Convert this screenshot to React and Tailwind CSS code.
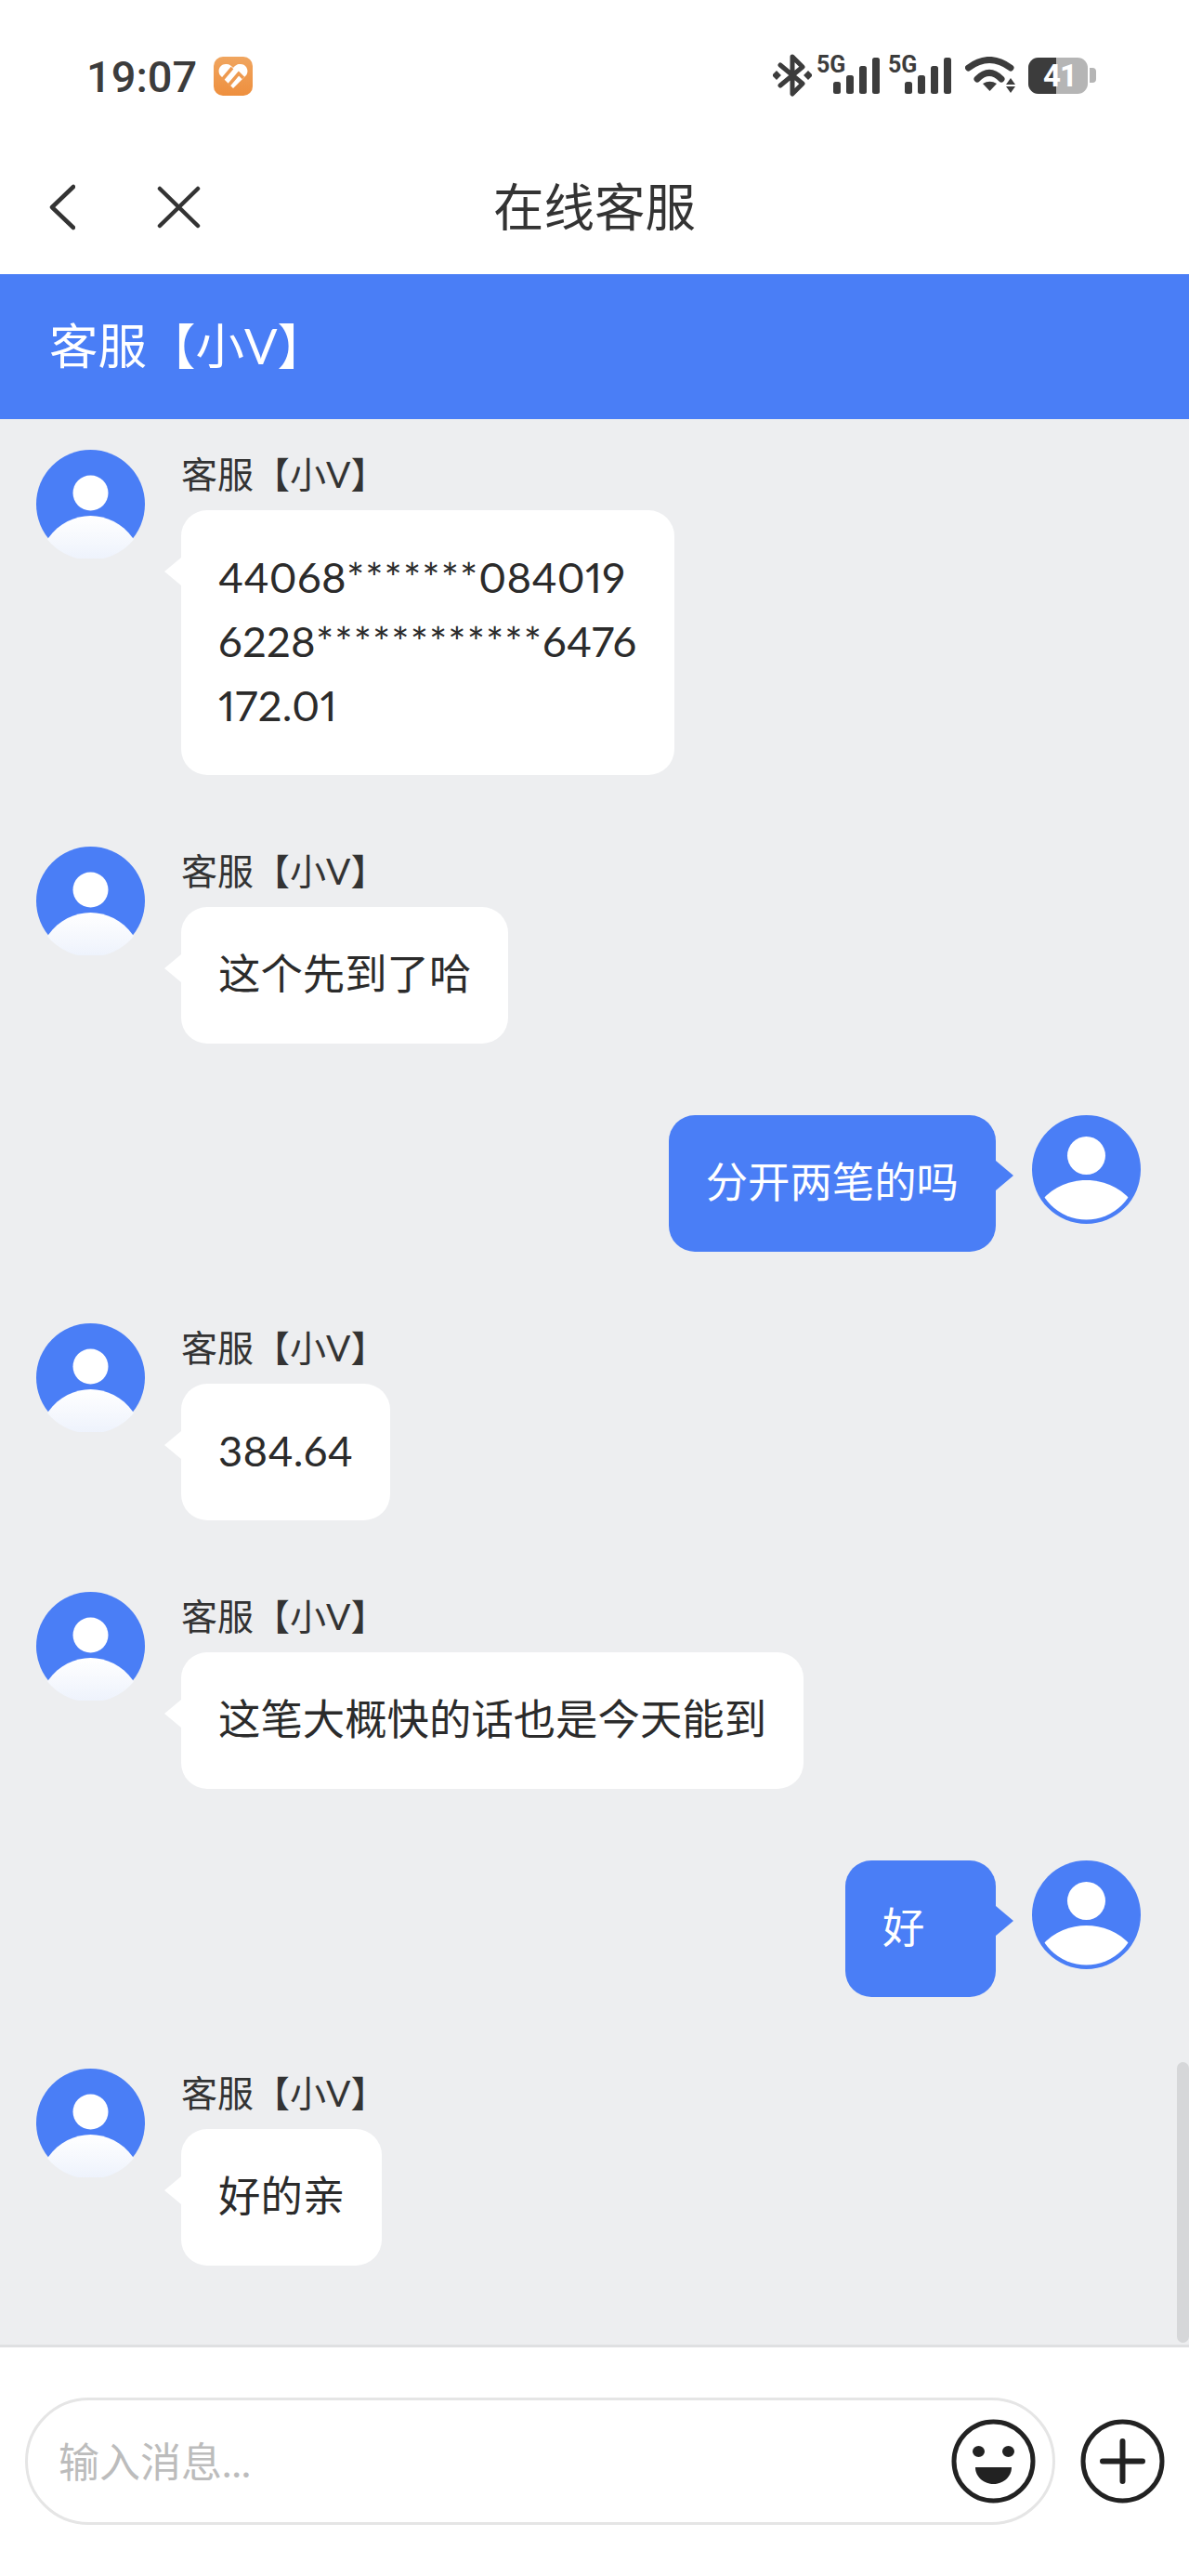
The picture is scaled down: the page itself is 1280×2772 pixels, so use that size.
const fontStack = 'font-[Lato,"Noto_Sans_CJK_SC",sans-serif]';

function Avatar({ ring }) {
  return (
    <svg width="117" height="117" viewBox="0 0 117 117" className="shrink-0">
      <defs>
        <linearGradient id="avatar-fade" x1="0" y1="0" x2="0" y2="1">
          <stop offset="0" stopColor="#ffffff" />
          <stop offset="1" stopColor="#edf2fc" />
        </linearGradient>
        <clipPath id="avatar-clip">
          <circle cx="58.5" cy="58.5" r="60" />
        </clipPath>
        <clipPath id="avatar-clip-ring">
          <circle cx="58.5" cy="58.5" r="54" />
        </clipPath>
      </defs>
      <circle cx="58.5" cy="58.5" r="58.5" fill="#4a7ef6" />
      {ring ? (
        <>
          <circle cx="58.5" cy="43.5" r="20.5" fill="#fff" />
          <path d="M10 92 C24 76 42 70 58.5 70 C75 70 93 76 107 92 V117 H10 Z" fill="#fff" clipPath="url(#avatar-clip-ring)" />
        </>
      ) : (
        <>
          <circle cx="58.5" cy="46.5" r="19" fill="#fff" />
          <path d="M13 95 C24 79 42 71 58.5 71 C75 71 93 79 104 95 L120 120 H-3 Z" fill="url(#avatar-fade)" clipPath="url(#avatar-clip)" />
        </>
      )}
    </svg>
  );
}

// the masked card numbers run a little wider than the font's own asterisks
function MessageLine({ text }) {
  if (!/\d/.test(text)) return <div>{text}</div>;
  return (
    <div className="tracking-[0.3px] proportional-nums">
      {text.split(/(\*+)/).map((part, i) =>
        part.startsWith('*') ? (
          <span key={i} className="tracking-[1.05px]">{part}</span>
        ) : (
          <span key={i}>{part}</span>
        )
      )}
    </div>
  );
}

function AgentMessage({ lines }) {
  return (
    <div className="flex items-start gap-[39px] pl-[39px] mb-[77px]">
      <Avatar />
      <div className="flex flex-col items-start">
        <div className="text-[39px] leading-[52px] mb-[13px] text-[#333333]">客服【小V】</div>
        <div className="relative rounded-[28px] bg-white px-[40px] pt-[37px] pb-[41px] text-[45.4px] leading-[69px] text-[#2b2b2b]">
          <span className="absolute left-[-18px] top-[51px] h-0 w-0 border-y-[15px] border-r-[18px] border-y-transparent border-r-white" />
          {lines.map((line) => (
            <MessageLine key={line} text={line} />
          ))}
        </div>
      </div>
    </div>
  );
}

function UserMessage({ text }) {
  return (
    <div className="flex items-start justify-end gap-[39px] pr-[52px] mb-[77px]">
      <div className="relative min-w-[162px] rounded-[28px] bg-[#4a7ef6] px-[40px] pt-[37px] pb-[41px] text-[45.4px] leading-[69px] text-white">
        <span className="absolute right-[-19px] top-[49px] h-0 w-0 border-y-[16px] border-l-[19px] border-y-transparent border-l-[#4a7ef6]" />
        {text}
      </div>
      <Avatar ring />
    </div>
  );
}

function SignalIcon() {
  return (
    <svg width="68" height="54" viewBox="0 -4 68 54" className="shrink-0">
      <text x="0" y="20" fontSize="25" fontWeight="700" fontFamily="Roboto, sans-serif" fill="#3c3c3c">5G</text>
      <rect x="18" y="30" width="8" height="13" rx="2.5" fill="#3c3c3c" />
      <rect x="32" y="23" width="8" height="20" rx="2.5" fill="#3c3c3c" />
      <rect x="46" y="13" width="8" height="30" rx="2.5" fill="#3c3c3c" />
      <rect x="60" y="4" width="8" height="39" rx="2.5" fill="#3c3c3c" />
    </svg>
  );
}

function StatusIcons() {
  return (
    <div className="flex items-center">
      <svg width="42" height="46" viewBox="0 0 42 46" fill="none" className="mr-[5px] shrink-0">
        <path d="M8 12 L32 32 L21 43 V3 L32 14 L8 34" stroke="#3c3c3c" strokeWidth="5" strokeLinejoin="round" strokeLinecap="round" />
        <rect x="-3.5" y="-3.5" width="7" height="7" fill="#3c3c3c" transform="translate(4 23) rotate(45)" />
        <rect x="-3.5" y="-3.5" width="7" height="7" fill="#3c3c3c" transform="translate(38 23) rotate(45)" />
      </svg>
      <SignalIcon />
      <div className="w-[9px]" />
      <SignalIcon />
      <svg width="54" height="40" viewBox="0 0 54 40" fill="none" className="ml-[15px] shrink-0">
        <path d="M3.500 12 Q26 -5 49 12" stroke="#3c3c3c" strokeWidth="7" strokeLinecap="round" />
        <path d="M13 24 Q26 11 39 24" stroke="#3c3c3c" strokeWidth="7" strokeLinecap="round" />
        <path d="M19 29 Q26.5 24.500 34 29 L26.500 37 Z" fill="#3c3c3c" />
        <path d="M49 23 L54 30 H44 Z M44 32 H54 L49 39 Z" fill="#3c3c3c" />
      </svg>
      <div className="relative ml-[14px] flex h-[39px] w-[64px] overflow-hidden rounded-[11px] bg-[#b5b5b5]">
        <div className="h-full w-[30px] bg-[#3c3c3c]" />
        <span className="absolute inset-0 pl-[4px] text-center font-['Roboto'] text-[33px] font-bold leading-[40px] tracking-[-1px] text-white">41</span>
      </div>
      <div className="ml-[2px] h-[16px] w-[7px] rounded-r-[4px] bg-[#b5b5b5]" />
    </div>
  );
}

function AppBadge() {
  return (
    <svg width="42" height="42" viewBox="0 0 42 42" className="ml-[18px] shrink-0">
      <defs>
        <linearGradient id="badge-fill" x1="0" y1="0" x2="0" y2="1">
          <stop offset="0" stopColor="#f0a55f" />
          <stop offset="1" stopColor="#ee8f3e" />
        </linearGradient>
      </defs>
      <rect width="42" height="42" rx="10" fill="url(#badge-fill)" />
      <path d="M21 34 L7 20 C3 14 8 7 14 8 C17 8 19 10 21 12 C23 10 25 8 28 8 C34 7 39 14 35 20 Z" fill="#fff" />
      <path d="M9 25 L20 12 M16 31 L27 18 L32 23" stroke="#ee9a50" strokeWidth="3.5" fill="none" />
    </svg>
  );
}

export default function App() {
  return (
    <div className={`flex h-[2772px] w-[1280px] flex-col overflow-hidden bg-white ${fontStack}`}>
      <div className="flex h-[162px] items-center justify-between pl-[93px] pr-[100px]">
        <div className="mt-[2px] flex items-center">
          <span className="font-['Roboto'] text-[47px] font-medium leading-none text-[#3c3c3c]">19:07</span>
          <AppBadge />
        </div>
        <StatusIcons />
      </div>

      <div className="grid h-[133px] grid-cols-[1fr_auto_1fr] items-center pb-[12px]">
        <div className="flex items-center pl-[53px]">
          <svg width="28" height="50" viewBox="0 0 28 50" fill="none" stroke="#333333" strokeWidth="4.500" strokeLinecap="round" strokeLinejoin="round">
            <path d="M26 3 L3 25 L26 47" />
          </svg>
          <svg width="47" height="46" viewBox="0 0 47 46" fill="none" stroke="#333333" strokeWidth="4.500" strokeLinecap="round" className="ml-[88px]">
            <path d="M3 3 L44 43 M44 3 L3 43" />
          </svg>
        </div>
        <div className="text-[54.500px] leading-none text-[#333333]">在线客服</div>
        <div />
      </div>

      <div className="flex h-[156px] items-center bg-[#4a7ef6] pb-[2px] pl-[53px] text-[52.500px] text-white">客服【小V】</div>

      <div className="relative min-h-0 flex-1 overflow-hidden bg-[#edeef0] pt-[33px]">
        <AgentMessage lines={['44068*******084019', '6228************6476', '172.01']} />
        <AgentMessage lines={['这个先到了哈']} />
        <UserMessage text="分开两笔的吗" />
        <AgentMessage lines={['384.64']} />
        <AgentMessage lines={['这笔大概快的话也是今天能到']} />
        <UserMessage text="好" />
        <AgentMessage lines={['好的亲']} />
        <div className="absolute bottom-[2px] right-0 h-[302px] w-[13px] rounded-full bg-[#d6d7d9]" />
      </div>

      <div className="flex h-[249px] items-start border-t-[3px] border-[#dfe0e2] bg-white pl-[27px] pt-[54px]">
        <div className="flex h-[137px] w-[1109px] items-center justify-between rounded-full border-[3px] border-[#e5e5e5] pl-[33px] pr-[18px]">
          <span className="text-[44px] text-[#bcbcbc]">输入消息...</span>
          <svg width="91" height="91" viewBox="0 0 91 91">
            <circle cx="45.500" cy="45.500" r="42.500" fill="none" stroke="#222222" strokeWidth="5" />
            <ellipse cx="29.500" cy="35" rx="6.500" ry="6" fill="#222222" />
            <ellipse cx="61.500" cy="35" rx="6.500" ry="6" fill="#222222" />
            <path d="M26 52 H65 C65 63 55 70 45.500 70 C36 70 26 63 26 52 Z" fill="#222222" />
          </svg>
        </div>
        <svg width="91" height="91" viewBox="0 0 91 91" className="ml-[27px] mt-[23px] shrink-0">
          <circle cx="45.500" cy="45.500" r="42.500" fill="none" stroke="#222222" strokeWidth="5" />
          <path d="M24 45.500 H67 M45.500 24 V67" stroke="#222222" strokeWidth="6" strokeLinecap="round" />
        </svg>
      </div>
    </div>
  );
}
